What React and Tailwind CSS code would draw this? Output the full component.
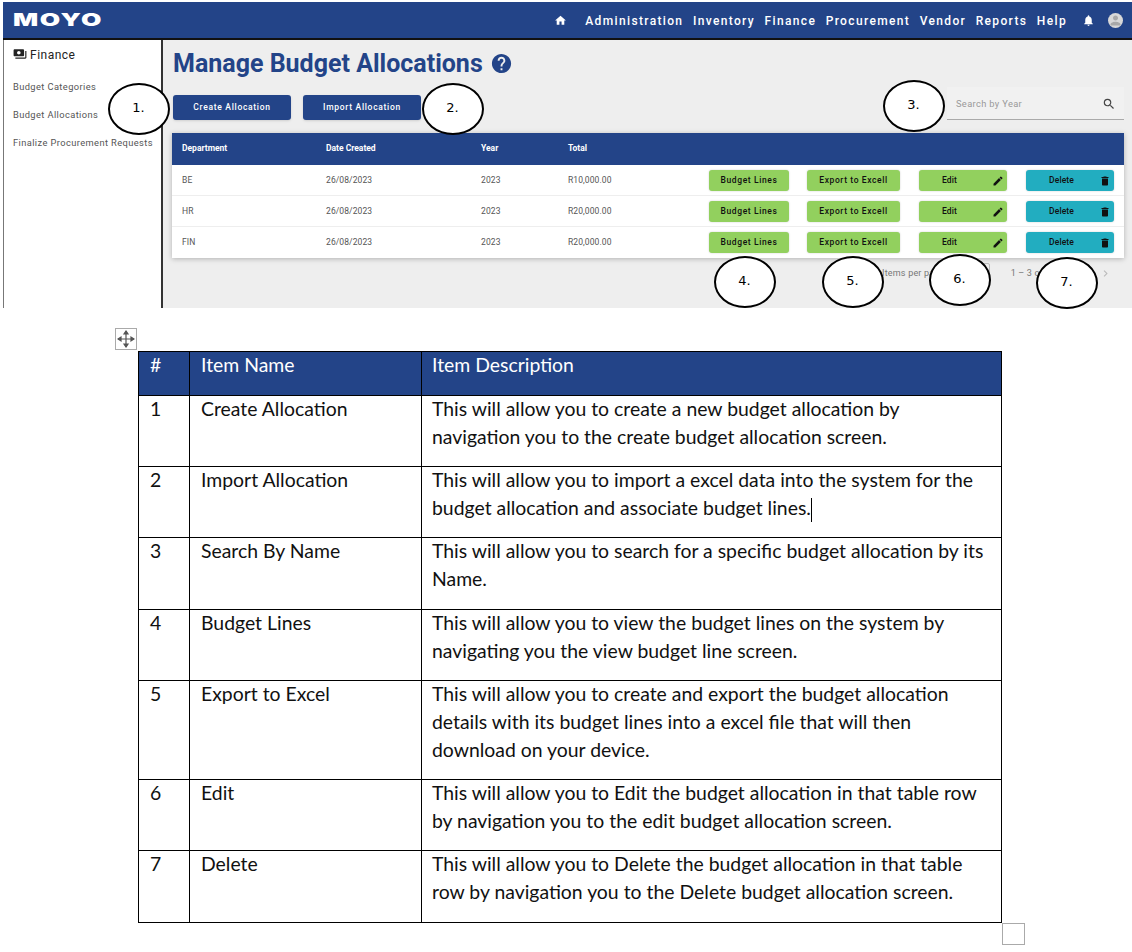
import React from "react"
import { MdHome, MdNotifications, MdEdit, MdDelete, MdSearch, MdHelp, MdPayments, MdChevronRight, MdPerson } from "react-icons/md"

const navItems = ["Administration", "Inventory", "Finance", "Procurement", "Vendor", "Reports", "Help"]
const sideItems = ["Budget Categories", "Budget Allocations", "Finalize Procurement Requests"]
const allocations = [
  { dept: "BE", date: "26/08/2023", year: "2023", total: "R10,000.00" },
  { dept: "HR", date: "26/08/2023", year: "2023", total: "R20,000.00" },
  { dept: "FIN", date: "26/08/2023", year: "2023", total: "R20,000.00" },
]
const docRows = [
  { n: "1", name: "Create Allocation", h: "h-[71px]", desc: ["This will allow you to create a new budget allocation by", "navigation you to the create budget allocation screen."] },
  { n: "2", name: "Import Allocation", h: "h-[71px]", desc: ["This will allow you to import a excel data into the system for the", "budget allocation and associate budget lines."], caret: true },
  { n: "3", name: "Search By Name", h: "h-[72px]", desc: ["This will allow you to search for a specific budget allocation by its", "Name."] },
  { n: "4", name: "Budget Lines", h: "h-[71px]", desc: ["This will allow you to view the budget lines on the system by", "navigating you the view budget line screen."] },
  { n: "5", name: "Export to Excel", h: "h-[99px]", desc: ["This will allow you to create and export the budget allocation", "details with its budget lines into a excel file that will then", "download on your device."] },
  { n: "6", name: "Edit", h: "h-[71px]", desc: ["This will allow you to Edit the budget allocation in that table row", "by navigation you to the edit budget allocation screen."] },
  { n: "7", name: "Delete", h: "h-[72px]", desc: ["This will allow you to Delete the budget allocation in that table", "row by navigation you to the Delete budget allocation screen."] },
]

function Callout({ label, className }) {
  return (
    <div className={`absolute w-[62px] h-[52px] rounded-[50%] border-2 border-black bg-white flex items-center justify-center pb-[3px] pr-[1px] text-[13px] text-black font-['DejaVu_Sans',sans-serif] ${className}`}>
      {label}
    </div>
  )
}

function RowButton({ children, className, icon }) {
  return (
    <button className={`relative h-[21px] rounded-[3px] flex items-center justify-center text-[8.5px] font-medium text-[#111] shadow-[0_0_2px_rgba(0,0,0,0.2)] ${className}`}>
      {children}
      {icon && <span className="absolute right-[3px] top-[5px] text-[12px]">{icon}</span>}
    </button>
  )
}

function AppScreen() {
  return (
    <div className="h-[308px] flex flex-col font-['Roboto',sans-serif] pt-[2px] pl-[3px]">
      <header className="h-[36px] shrink-0 bg-[#234488] flex items-center text-white border-b-2 border-[#111] box-content">
        <span className="ml-[10px] w-[88px] text-[17px] leading-none font-black tracking-[1px] font-['Inter',sans-serif] origin-left scale-x-[1.55]">MOYO</span>
        <nav className="ml-auto flex items-center text-[12px] font-medium tracking-[1.35px] pt-[1px]">
          <MdHome className="text-[13px] mr-[18px]" />
          <div className="flex gap-[9.5px]">
            {navItems.map((item) => (
              <span key={item}>{item}</span>
            ))}
          </div>
          <MdNotifications className="text-[13px] ml-[15px]" />
          <span className="ml-[13px] mr-[9px] w-[15px] h-[15px] rounded-full bg-[#d8d8d8] flex items-center justify-center overflow-hidden text-[#a8a8a8]">
            <MdPerson className="text-[15px]" />
          </span>
        </nav>
      </header>
      <div className="flex-1 flex min-h-0">
        <aside className="w-[160px] shrink-0 bg-white border-l border-l-[#777] border-r-2 border-r-[#333] pl-[9px] pt-[6px]">
          <div className="flex items-center gap-[3px] text-[#222] text-[12px] tracking-[0.5px]">
            <MdPayments className="text-[14px] text-[#222] -mt-[3px]" />
            Finance
          </div>
          <ul className="mt-[17px] flex flex-col gap-[17px] text-[9.3px] leading-[11px] text-[#555] tracking-[0.4px]">
            {sideItems.map((item) => (
              <li key={item}>{item}</li>
            ))}
          </ul>
        </aside>
        <main className="flex-1 bg-[#eeeeee] pl-[9px] pr-[8px] min-w-0">
          <div className="flex items-center h-[46px] pl-[1px] text-[#234488]">
            <h1 className="text-[25px] font-bold leading-none">Manage Budget Allocations</h1>
            <MdHelp className="text-[23px] ml-[7px]" />
          </div>
          <div className="flex items-end justify-between h-[34px] pl-[1px]">
            <div className="flex gap-[12px]">
              <button className="w-[118px] h-[25px] rounded-[3px] bg-[#234488] text-white text-[8.5px] font-medium tracking-[0.7px] shadow-sm">Create Allocation</button>
              <button className="w-[118px] h-[25px] rounded-[3px] bg-[#234488] text-white text-[8.5px] font-medium tracking-[0.7px] shadow-sm">Import Allocation</button>
            </div>
            <div className="w-[177px] h-[33px] bg-[#f1f1f1] border-b border-[#aaa] flex items-center justify-between pl-[9px] pr-[8px] pt-[1px] text-[9.3px] tracking-[0.35px] text-[#999]">
              Search by Year
              <MdSearch className="text-[14px] text-[#444]" />
            </div>
          </div>
          <div className="mt-[13px] bg-white shadow-[0_1px_5px_rgba(0,0,0,0.25)]">
            <div className="h-[32px] bg-[#234488] flex items-center pl-[10px] pb-[1px] text-white text-[8.5px] font-bold">
              <span className="w-[144px]">Department</span>
              <span className="w-[155px]">Date Created</span>
              <span className="w-[87px]">Year</span>
              <span>Total</span>
            </div>
            {allocations.map((row, i) => (
              <div key={row.dept} className={`h-[31px] flex items-center pl-[10px] pt-[1px] text-[8.5px] tracking-[0.1px] text-[#555] border-b ${i < 2 ? "border-[#eee]" : "border-transparent"}`}>
                <span className="w-[144px]">{row.dept}</span>
                <span className="w-[155px]">{row.date}</span>
                <span className="w-[87px]">{row.year}</span>
                <span className="w-[141px]">{row.total}</span>
                <RowButton className="w-[80px] tracking-[0.6px] bg-[#92d05e]">Budget Lines</RowButton>
                <RowButton className="w-[93px] ml-[18px] tracking-[0.6px] bg-[#92d05e]">Export to Excell</RowButton>
                <RowButton className="w-[88px] ml-[19px] bg-[#92d05e] pr-[27px]" icon={<MdEdit />}>Edit</RowButton>
                <RowButton className="w-[88px] ml-[19px] bg-[#22adc0] pr-[17px]" icon={<MdDelete />}>Delete</RowButton>
              </div>
            ))}
          </div>
          <div className="h-[30px] pt-[1px] flex items-center text-[9px] tracking-[0.2px] text-[#777]">
            <span className="ml-[710px] whitespace-nowrap">Items per page</span>
            <span className="ml-[8px] w-[37px] h-[22px] border border-[#bbb] rounded-[2px]" />
            <span className="ml-[21px] whitespace-nowrap">1 – 3 of 3</span>
            <MdChevronRight className="text-[13px] text-[#bbb] ml-auto mr-[12px]" />
          </div>
        </main>
      </div>
    </div>
  )
}

function DocTable() {
  return (
    <div className="pt-[43px] pl-[138px] font-['Lato',sans-serif] text-[19.4px] leading-[28px] text-[#111]">
      <table className="w-[864px] table-fixed border-collapse">
        <colgroup>
          <col className="w-[51px]" />
          <col className="w-[232px]" />
          <col />
        </colgroup>
        <thead>
          <tr className="h-[44px] bg-[#234488] text-white text-left">
            <th className="border border-black px-[11px] align-top font-normal"><div className="-mt-px">#</div></th>
            <th className="border border-black px-[11px] align-top font-normal"><div className="-mt-px">Item Name</div></th>
            <th className="border border-black px-[10px] align-top font-normal"><div className="-mt-px">Item Description</div></th>
          </tr>
        </thead>
        <tbody>
          {docRows.map((row) => (
            <tr key={row.n} className={row.h}>
              <td className="border border-black px-[11px] align-top"><div className="-mt-px">{row.n}</div></td>
              <td className="border border-black px-[11px] align-top"><div className="-mt-px">{row.name}</div></td>
              <td className="border border-black px-[10px] align-top">
                <div className="-mt-px">
                  {row.desc.map((line, i) => (
                    <div key={i} className="whitespace-nowrap">
                      {line}
                      {row.caret && i === row.desc.length - 1 && <span className="inline-block w-px h-[24px] bg-black align-middle" />}
                    </div>
                  ))}
                </div>
              </td>
            </tr>
          ))}
        </tbody>
      </table>
    </div>
  )
}

export default function App() {
  return (
    <div className="relative w-[1132px] h-[952px] bg-white overflow-hidden">
      <AppScreen />
      <DocTable />

      <Callout label="1." className="left-[108px] top-[83px]" />
      <Callout label="2." className="left-[422px] top-[83px]" />
      <Callout label="3." className="left-[883px] top-[80px]" />
      <Callout label="4." className="left-[714px] top-[256px]" />
      <Callout label="5." className="left-[822px] top-[256px]" />
      <Callout label="6." className="left-[929px] top-[254px]" />
      <Callout label="7." className="left-[1036px] top-[257px]" />

      {/* word table move handle */}
      <div className="absolute left-[115px] top-[328px] w-[22px] h-[22px] border border-[#aaa] bg-white flex items-center justify-center">
        <svg width="18" height="18" viewBox="0 0 18 18" fill="none" stroke="#555" strokeWidth="1.2">
          <path d="M9 1v16M1 9h16" />
          <path d="M9 1l-2 3h4zM9 17l-2-3h4zM1 9l3-2v4zM17 9l-3-2v4z" fill="#555" />
        </svg>
      </div>
      <div className="absolute left-[1002px] top-[923px] w-[23px] h-[22px] border border-[#aaa] bg-white" />
    </div>
  )
}
